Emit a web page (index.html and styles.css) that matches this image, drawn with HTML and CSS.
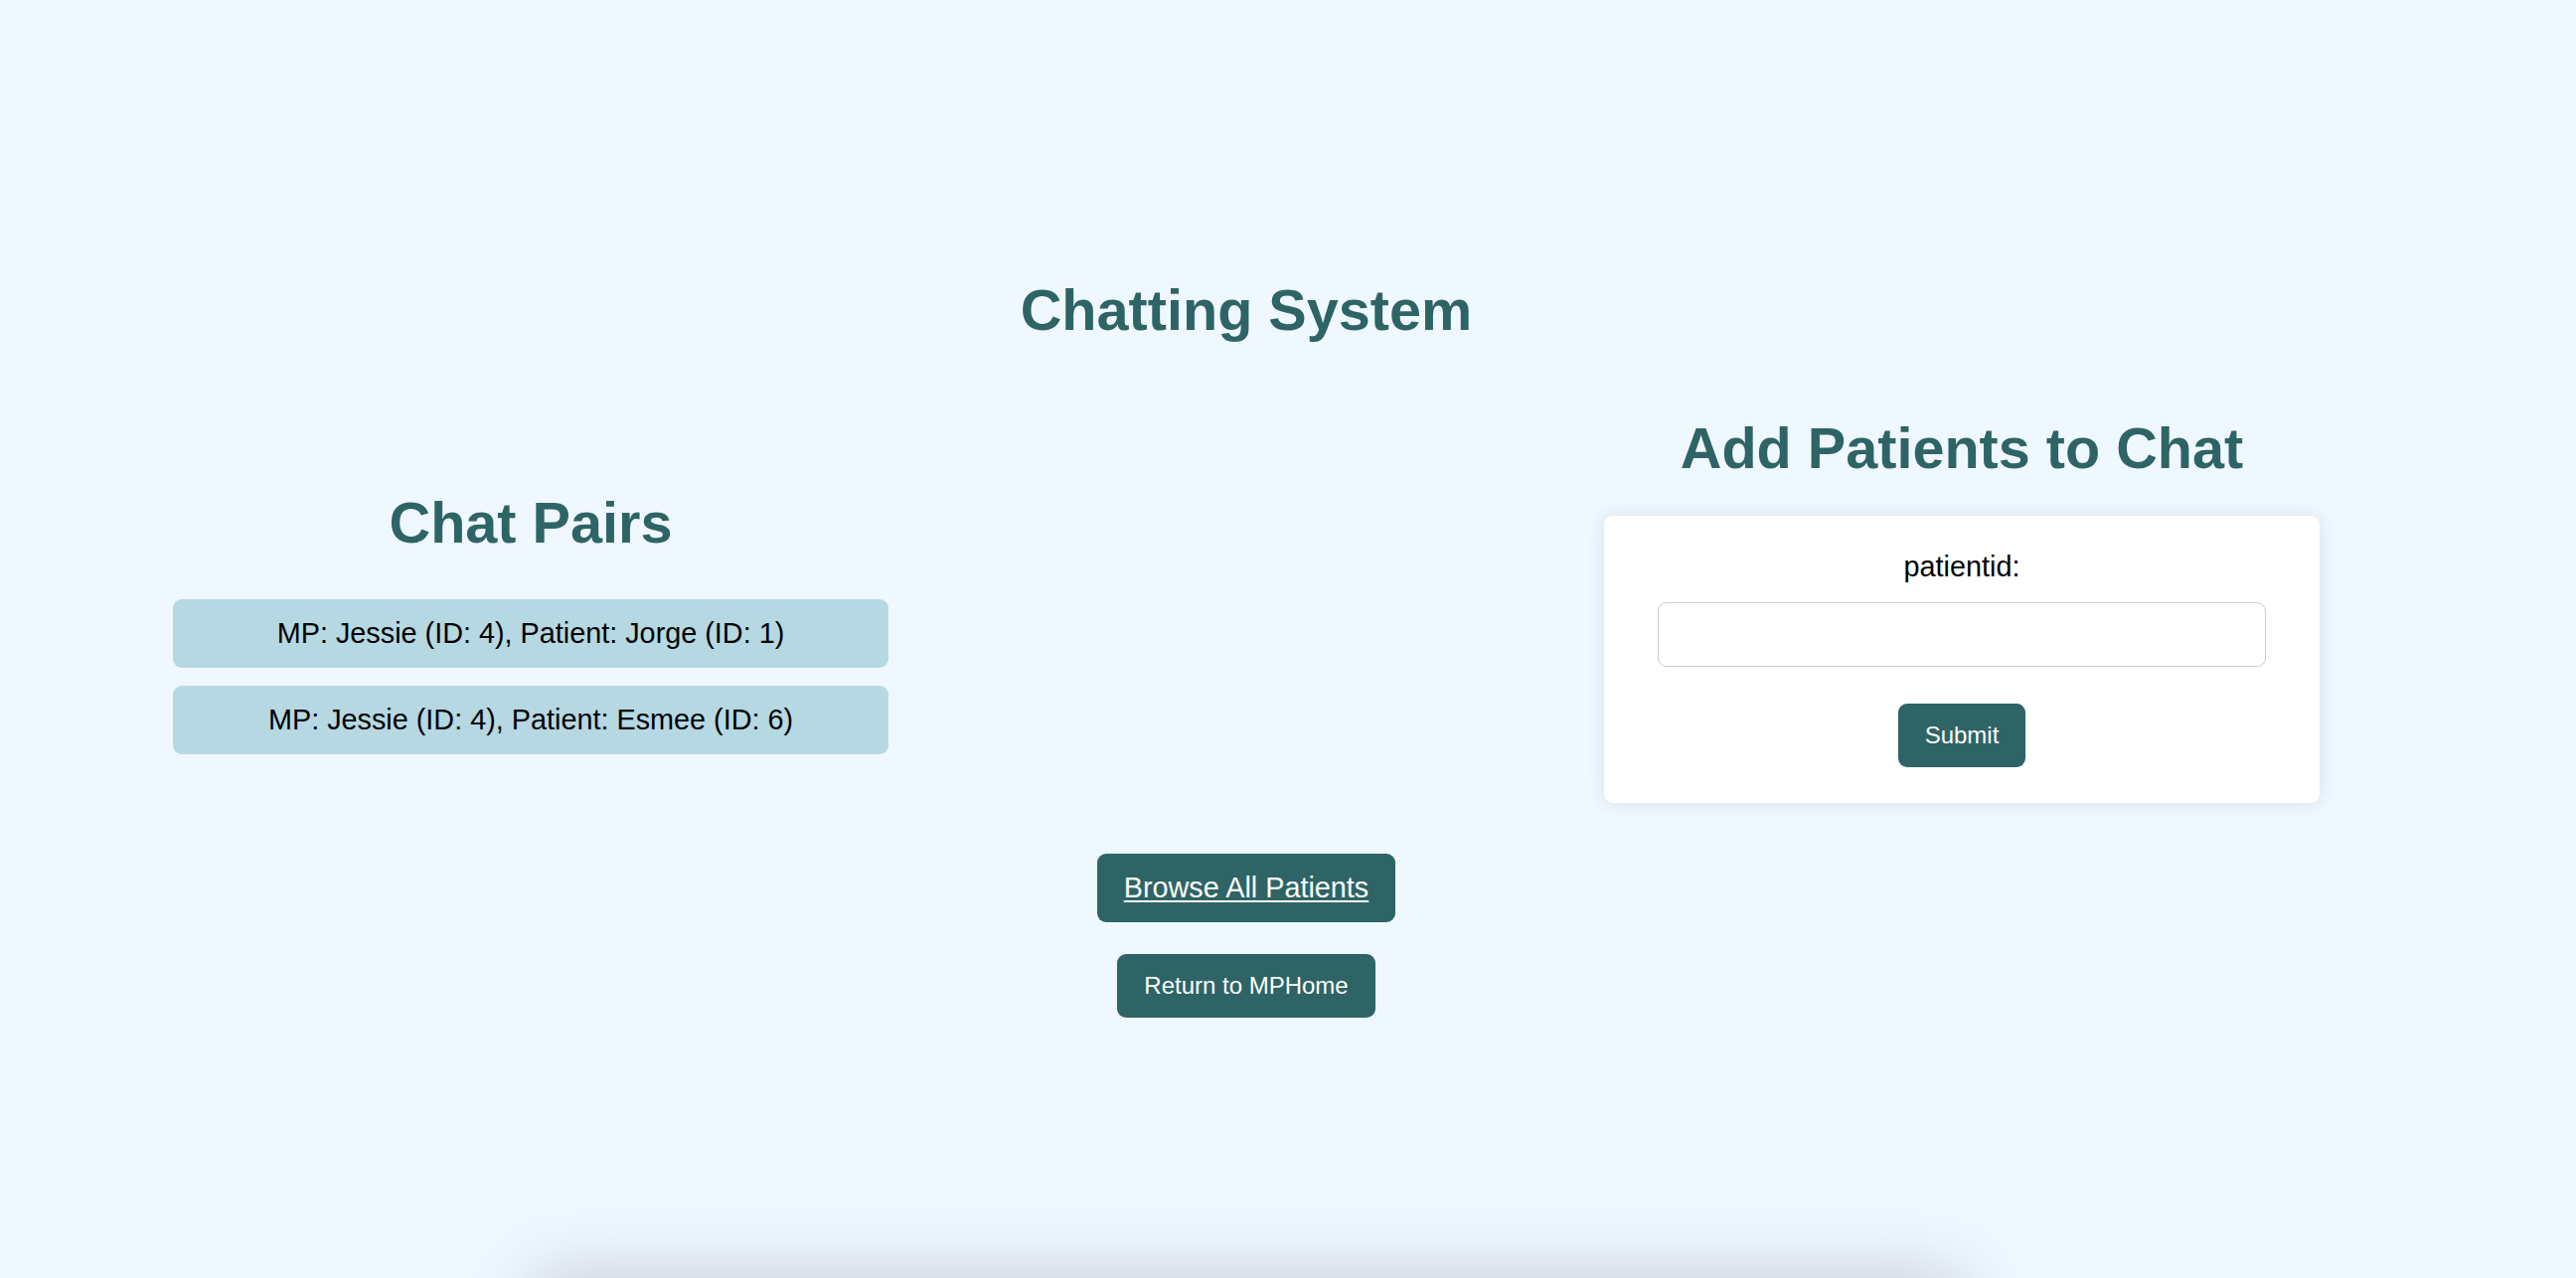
FILE: index.html
```html
<!DOCTYPE html>
<html lang="en">
<head>
<meta charset="utf-8">
<title>Chatting System</title>
<link rel="stylesheet" href="styles.css">
</head>
<body>
<div class="page">
  <h1 class="title">Chatting System</h1>
  <div class="columns">
    <section class="col col-left">
      <h2 class="heading heading-left">Chat Pairs</h2>
      <div class="pairs">
        <div class="pair">MP: Jessie (ID: 4), Patient: Jorge (ID: 1)</div>
        <div class="pair">MP: Jessie (ID: 4), Patient: Esmee (ID: 6)</div>
      </div>
    </section>
    <section class="col col-right">
      <h2 class="heading heading-right">Add Patients to Chat</h2>
      <form class="card">
        <label class="label" for="patientid">patientid:</label>
        <input class="input" id="patientid" type="text">
        <button class="btn btn-small" type="button">Submit</button>
      </form>
    </section>
  </div>
  <div class="actions">
    <a class="btn btn-link" href="#">Browse All Patients</a>
    <button class="btn btn-small" type="button">Return to MPHome</button>
  </div>
  <div class="below"></div>
</div>
</body>
</html>
```

FILE: styles.css
```css
html, body {
  margin: 0;
  padding: 0;
  background: #f0f8ff;
}

body {
  font-family: "Liberation Sans", Arial, sans-serif;
  font-size: 28.8px;
  color: #000;
}

.page {
  width: 2508px;
  padding-top: 279px;
  display: flex;
  flex-direction: column;
  align-items: center;
}

.title {
  margin: 0;
  font-size: 57.6px;
  font-weight: bold;
  line-height: normal;
  color: #2e6465;
  text-align: center;
}

.columns {
  align-self: stretch;
  margin-top: 73px;
  padding: 0 174px;
  display: flex;
  justify-content: space-between;
  align-items: flex-start;
}

.col {
  width: 720px;
  display: flex;
  flex-direction: column;
  align-items: stretch;
}

.col-left {
  padding-top: 75px;
}

.heading {
  margin: 0;
  font-size: 57.6px;
  font-weight: bold;
  line-height: normal;
  color: #2e6465;
  text-align: center;
}

.heading-left {
  margin-bottom: 44px;
}

.heading-right {
  margin-bottom: 35px;
}

.pairs {
  display: flex;
  flex-direction: column;
  gap: 18px;
}

.pair {
  background: #b5d8e3;
  border-radius: 9px;
  padding: 18px;
  text-align: center;
  line-height: normal;
}

.card {
  background: #ffffff;
  border-radius: 9px;
  box-shadow: 0 0 18px rgba(0, 0, 0, 0.1);
  padding: 35px 54px 36px;
  display: flex;
  flex-direction: column;
  align-items: center;
}

.label {
  display: block;
  line-height: normal;
  margin-bottom: 19px;
}

.input {
  box-sizing: border-box;
  width: 100%;
  height: 65px;
  padding: 18px;
  border: 1px solid #cccccc;
  border-radius: 9px;
  font-family: "Liberation Sans", Arial, sans-serif;
  font-size: 24px;
  background: #fff;
  margin-bottom: 37px;
}

.btn {
  display: inline-block;
  background: #2e6465;
  color: #ffffff;
  border: none;
  border-radius: 9px;
  padding: 18px 27px;
  font-family: "Liberation Sans", Arial, sans-serif;
  line-height: normal;
  cursor: pointer;
}

.btn-small {
  font-size: 24px;
  height: 64px;
}

.btn-link {
  font-size: 28.8px;
  text-decoration: underline;
  text-underline-offset: 3px;
}

.actions {
  margin-top: 51px;
  display: flex;
  flex-direction: column;
  align-items: center;
  gap: 32px;
}

.below {
  margin-top: 262px;
  width: 1440px;
  height: 400px;
  background: #f0f8ff;
  border-radius: 18px;
  box-shadow: 0 0 72px rgba(0, 0, 0, 0.2);
}
```
